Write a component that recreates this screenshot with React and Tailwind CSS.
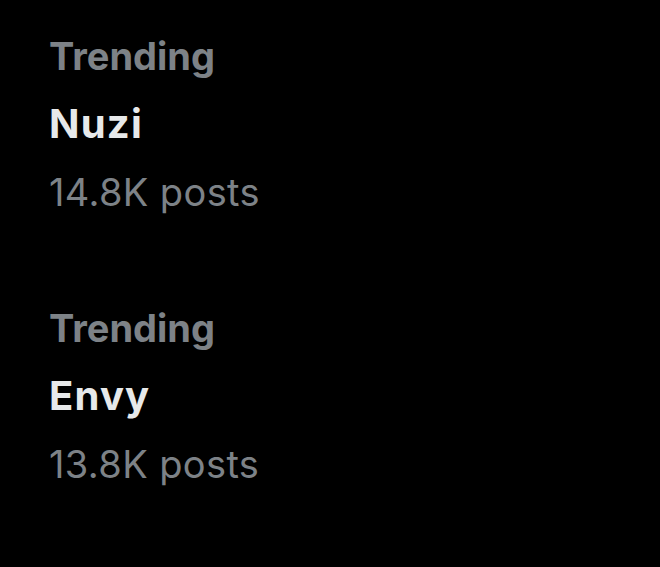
import React from 'react';

const trends = [
  { name: 'Nuzi', posts: '14.8K posts' },
  { name: 'Envy', posts: '13.8K posts' },
];

const TrendItem = ({ name, posts }) => (
  <div className="flex flex-col leading-[68px]">
    <span className="font-bold text-[#7d8287]">Trending</span>
    <span className="font-bold text-[40px] tracking-[0.03em] text-[#e7e9ea]">{name}</span>
    <span className="tracking-[0.01em] text-[#7d8287]">{posts}</span>
  </div>
);

export default function App() {
  return (
    <div
      className="min-h-[567px] w-[660px] bg-black pl-[49px] pt-[22px] text-[38px] flex flex-col gap-[68px]"
      style={{ fontFamily: 'Inter, "Noto Sans", sans-serif' }}
    >
      {trends.map((t) => (
        <TrendItem key={t.name} {...t} />
      ))}
    </div>
  );
}
